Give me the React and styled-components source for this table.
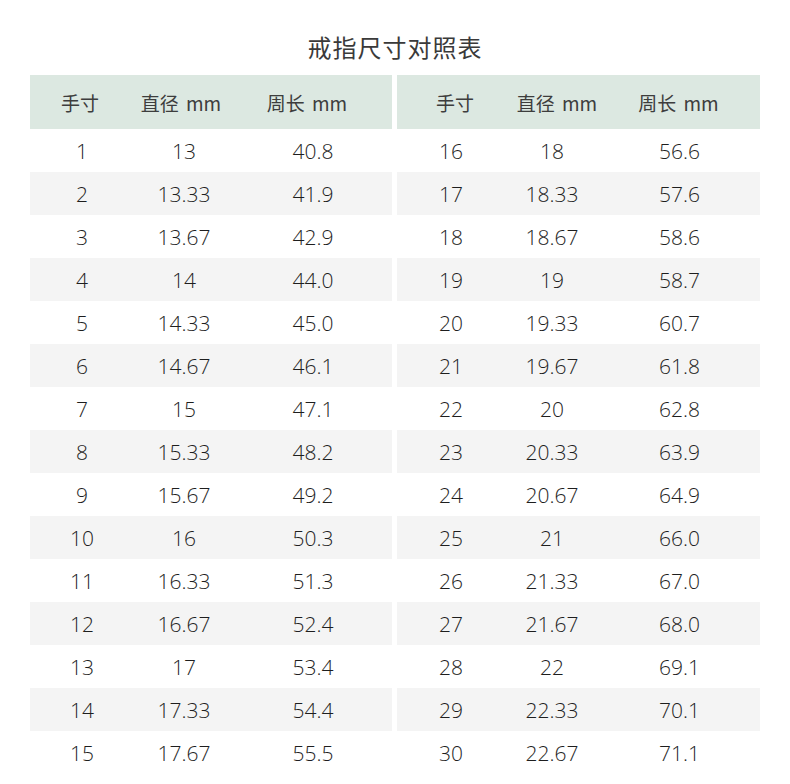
import React from "react";
import styled, { createGlobalStyle } from "styled-components";

const Global = createGlobalStyle`
  html, body { margin: 0; padding: 0; background: #ffffff; }
  body { font-family: "Noto Sans", "Noto Sans CJK SC", sans-serif; color: #333; }
`;

const Page = styled.div`
  width: 790px;
  height: 784px;
  overflow: hidden;
  background: #fff;
`;

const Title = styled.h1`
  margin: 0;
  padding-top: 32px;
  height: 43px;
  text-align: center;
  font-family: "Noto Sans CJK SC", sans-serif;
  font-weight: 400;
  font-size: 24px;
  line-height: 30px;
  letter-spacing: 1px;
  color: #3a3a3a;
`;

const Table = styled.div`
  display: grid;
  grid-template-columns: 362px 363px;
  column-gap: 5px;
  margin-left: 30px;
`;

const Half = styled.div`
  display: flex;
  flex-direction: column;
`;

const Cols = styled.div`
  display: grid;
  grid-template-columns: ${(p) => p.$cols || "104px 100px 1fr"};
  align-items: center;
  justify-items: center;
`;

const HeadRow = styled(Cols)`
  height: 54px;
  background: #dce8e1;
  font-family: "Noto Sans CJK SC", sans-serif;
  font-size: 19px;
  color: #3d3d3d;
`;

const HeadCell = styled.div`
  transform: translateX(${(p) => p.$shift || 0}px);
  white-space: nowrap;
  word-spacing: 3px;
`;

const Row = styled(Cols)`
  height: 43px;
  background: ${(p) => (p.$striped ? "#f4f4f4" : "transparent")};
  font-family: "Open Sans", "Noto Sans", sans-serif;
  font-size: 21px;
  font-weight: 300;
  color: #1e1e1e;
`;

const Cell = styled.div`
  white-space: nowrap;
`;

const left = [
  [1, "13", "40.8"],
  [2, "13.33", "41.9"],
  [3, "13.67", "42.9"],
  [4, "14", "44.0"],
  [5, "14.33", "45.0"],
  [6, "14.67", "46.1"],
  [7, "15", "47.1"],
  [8, "15.33", "48.2"],
  [9, "15.67", "49.2"],
  [10, "16", "50.3"],
  [11, "16.33", "51.3"],
  [12, "16.67", "52.4"],
  [13, "17", "53.4"],
  [14, "17.33", "54.4"],
  [15, "17.67", "55.5"],
];

const right = [
  [16, "18", "56.6"],
  [17, "18.33", "57.6"],
  [18, "18.67", "58.6"],
  [19, "19", "58.7"],
  [20, "19.33", "60.7"],
  [21, "19.67", "61.8"],
  [22, "20", "62.8"],
  [23, "20.33", "63.9"],
  [24, "20.67", "64.9"],
  [25, "21", "66.0"],
  [26, "21.33", "67.0"],
  [27, "21.67", "68.0"],
  [28, "22", "69.1"],
  [29, "22.33", "70.1"],
  [30, "22.67", "71.1"],
];

function Side({ rows, shifts, cols }) {
  return (
    <Half>
      <HeadRow $cols={cols}>
        <HeadCell $shift={shifts[0]}>手寸</HeadCell>
        <HeadCell $shift={shifts[1]}>直径 mm</HeadCell>
        <HeadCell $shift={shifts[2]}>周长 mm</HeadCell>
      </HeadRow>
      {rows.map(([s, d, c], i) => (
        <Row key={s} $cols={cols} $striped={i % 2 === 1}>
          <Cell>{s}</Cell>
          <Cell>{d}</Cell>
          <Cell>{c}</Cell>
        </Row>
      ))}
    </Half>
  );
}

export default function App() {
  return (
    <Page>
      <Global />
      <Title>戒指尺寸对照表</Title>
      <Table>
        <Side rows={left} cols="104px 100px 1fr" shifts={[-2, -3, -6]} />
        <Side rows={right} cols="108px 94px 1fr" shifts={[4, 5, -1]} />
      </Table>
    </Page>
  );
}
